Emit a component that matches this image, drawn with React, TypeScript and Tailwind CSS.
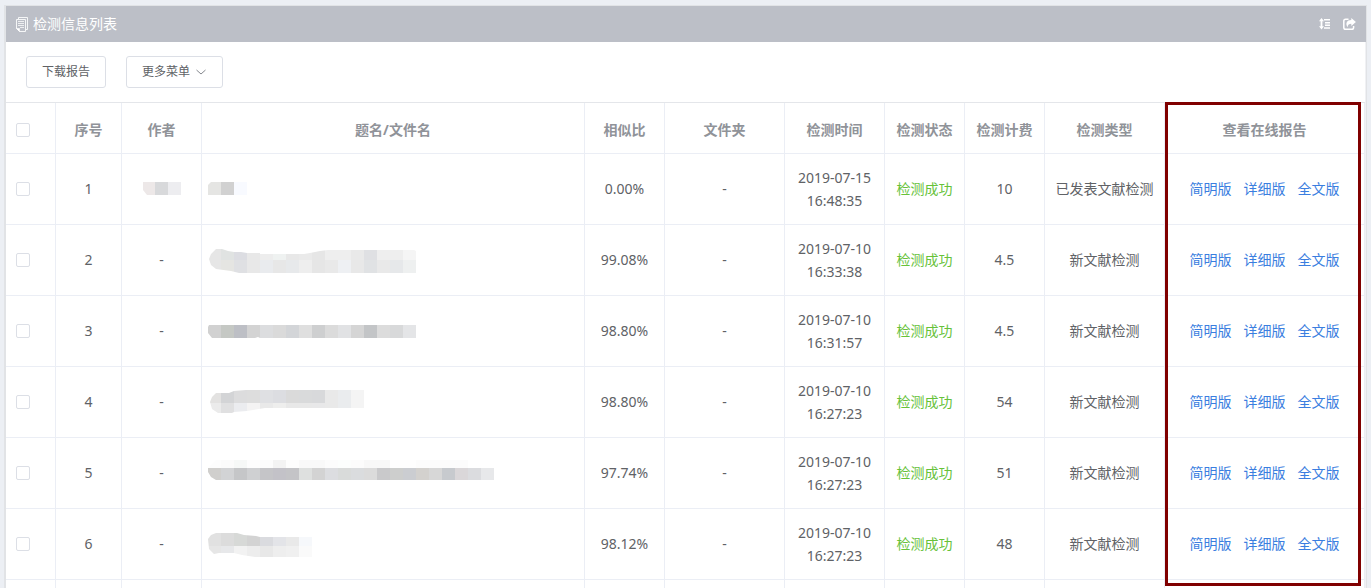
import { useId } from "react"

type MosaicBand = { y: number; height: number; colors: string[] }

type MosaicData = { width: number; outline: string; bands: MosaicBand[] }

type ReportRow = {
  id: number
  author?: MosaicData
  title: MosaicData
  similarity: string
  date: string
  time: string
  fee: string
  type: string
}

const CELL = 13

const ROWS: ReportRow[] = [
  {
    id: 1,
    author: {
      width: 39,
      outline: "M1 6H39V19H5L1 14Z",
      bands: [{ y: 6, height: 13, colors: ["#ede8e8", "#d8d9db", "#ededf0"] }],
    },
    title: {
      width: 39,
      outline: "M3 6H39V19H0V9Z",
      bands: [{ y: 6, height: 13, colors: ["#e5e5e3", "#d1d1d1", "#f8faff"] }],
    },
    similarity: "0.00%",
    date: "2019-07-15",
    time: "16:48:35",
    fee: "10",
    type: "已发表文献检测",
  },
  {
    id: 2,
    title: {
      width: 208,
      outline:
        "M1 12L3 7L8 2H14L20 4L26 5L33 5L39 6H52V7H96L102 6L112 4L120 3H206L208 4V26H31L23 24L8 22L3 18Z",
      bands: [
        {
          y: 0,
          height: 13,
          colors: [
            "#e6e6e6", "#e0e3e2", "#dcdde2", "#e8e8e8", "#ededed", "#eff2f1", "#e8e8e8", "#eaeaea",
            "#e6e6e6", "#eeeeee", "#eeeeee", "#e9e9e9", "#dfe0e3", "#eeeeee", "#eeeeee", "#f5f5f5",
          ],
        },
        {
          y: 13,
          height: 13,
          colors: [
            "#e6e6e6", "#e5e5e2", "#dfe0e3", "#e8e8e8", "#e9ebee", "#e7e7e7", "#e7e9eb", "#eeeeee",
            "#e6e6e6", "#e9e9e9", "#eef0f3", "#e8e8e8", "#e0e2e4", "#e9e9e9", "#e6e8ea", "#eef0f0",
          ],
        },
      ],
    },
    similarity: "99.08%",
    date: "2019-07-10",
    time: "16:33:38",
    fee: "4.5",
    type: "新文献检测",
  },
  {
    id: 3,
    title: {
      width: 208,
      outline: "M1 7H208V20H52L50 19L47 20H4L0 15V9Z",
      bands: [
        {
          y: 7,
          height: 13,
          colors: [
            "#d1d1d1", "#c5c8c4", "#bdbfc5", "#d3d3d3", "#dcdddf", "#dadada", "#d3d5d8", "#dfdfdf",
            "#cecfd0", "#dbdbdb", "#e1e2e4", "#d5d5d5", "#c3c5c7", "#dcdcdc", "#d8d9da", "#e4e5e7",
          ],
        },
      ],
    },
    similarity: "98.80%",
    date: "2019-07-10",
    time: "16:31:57",
    fee: "4.5",
    type: "新文献检测",
  },
  {
    id: 4,
    title: {
      width: 156,
      outline: "M2 13L4 8L8 4H21L26 2L38 1H156V19H57L39 22L26 23L24 24H10L4 20Z",
      bands: [
        {
          y: 0,
          height: 14,
          colors: [
            "#e3e2e1", "#d3d4d6", "#dcdcdd", "#dddddd", "#dfe0e3", "#dcdde1", "#dadada", "#d9dadb",
            "#d8d9db", "#e9e9e9", "#eaecee", "#f4f4f4",
          ],
        },
        {
          y: 14,
          height: 12,
          colors: [
            "#ebebeb", "#e0e0e1", "#ebecef", "#f4f3f3", "#e9e9e9", "#eeeeed", "#e8e8e8", "#e8e8e8",
            "#e8e8e9", "#e9e9e9", "#eaecee", "#f4f4f4",
          ],
        },
      ],
    },
    similarity: "98.80%",
    date: "2019-07-10",
    time: "16:27:23",
    fee: "54",
    type: "新文献检测",
  },
  {
    id: 5,
    title: {
      width: 286,
      outline: "M0 8L8 0H260V8H286V20H8L3 17L0 12Z",
      bands: [
        {
          y: 0,
          height: 8,
          colors: [
            "#fdfdfd", "#fbfbfb", "#f6f8f7", "#fdfdfd", "#fcfcfc", "#f3f3f3", "#fdfdfd", "#f9f9f9",
            "#f9f9f9", "#fcfcfc", "#fcfefd", "#fcfcfc", "#f8f8f8", "#f8f8f8", "#fefefe", "#fefefe",
            "#fcfcfc", "#fcfcfc", "#fcfcfc", "#fcfcfc", "#ffffff", "#ffffff",
          ],
        },
        {
          y: 8,
          height: 12,
          colors: [
            "#d0cfcd", "#d2d3d5", "#c5c6c8", "#cfd0d2", "#c5c5c8", "#c3c2c8", "#c4c4c7", "#dee0df",
            "#d3d3d3", "#dcdde0", "#d9dbda", "#dadcde", "#dbdbdb", "#c9c9cb", "#cdcecd", "#cbcdd1",
            "#d3d1ce", "#d7d7d7", "#c7cace", "#dad7d9", "#dbdcdf", "#e7e8ea",
          ],
        },
      ],
    },
    similarity: "97.74%",
    date: "2019-07-10",
    time: "16:27:23",
    fee: "51",
    type: "新文献检测",
  },
  {
    id: 6,
    title: {
      width: 104,
      outline: "M0 8L3 4L8 2H29L36 4L48 5L52 6H104V26H47L34 24L26 22H11L6 23L1 18Z",
      bands: [
        {
          y: 0,
          height: 15,
          colors: [
            "#e1e1e1", "#dcdcdc", "#d7d9d7", "#d3d3d3", "#dadbdf", "#e3e4e8", "#e9e9e9", "#f6f8fb",
          ],
        },
        {
          y: 15,
          height: 11,
          colors: [
            "#e6e6e6", "#e7e8ea", "#f2f2f2", "#ededed", "#e8e8e8", "#eeeeee", "#f0f0f0", "#fafafa",
          ],
        },
      ],
    },
    similarity: "98.12%",
    date: "2019-07-10",
    time: "16:27:23",
    fee: "48",
    type: "新文献检测",
  },
]

const COLUMNS = [
  { label: "序号", width: "w-[66px]" },
  { label: "作者", width: "w-20" },
  { label: "题名/文件名", width: "" },
  { label: "相似比", width: "w-20" },
  { label: "文件夹", width: "w-[120px]" },
  { label: "检测时间", width: "w-[100px]" },
  { label: "检测状态", width: "w-20" },
  { label: "检测计费", width: "w-20" },
  { label: "检测类型", width: "w-[120px]" },
  { label: "查看在线报告", width: "w-[200px]" },
]

const LINKS = ["简明版", "详细版", "全文版"]

const cellClass = "border-r border-b border-[#ebeef5]"
const headCellClass = "border-r border-b border-[#ebeef5] pt-1"
const buttonClass =
  "flex h-8 items-center rounded-[3px] border border-[#dcdfe6] bg-white px-[15px] text-xs text-[#606266] hover:border-blue-300"

// Pixelated block that hides the private text of a cell
const Mosaic = ({ data }: { data: MosaicData }) => {
  const clipId = useId()

  return (
    <svg
      width={data.width}
      height={26}
      viewBox={`0 0 ${data.width} 26`}
      shapeRendering="crispEdges"
      aria-hidden="true"
    >
      <clipPath id={clipId}>
        <path d={data.outline} />
      </clipPath>
      <g clipPath={`url(#${clipId})`}>
        {data.bands.map((band) =>
          band.colors.map((color, i) => (
            <rect
              key={`${band.y}-${i}`}
              x={i * CELL}
              y={band.y}
              width={CELL}
              height={band.height}
              fill={color}
            />
          ))
        )}
      </g>
    </svg>
  )
}

const DocumentsIcon = () => (
  <svg width="13" height="15" viewBox="0 0 13 15" fill="none" stroke="currentColor" aria-hidden="true">
    <path d="M2.5 2V.5H11.5V12.5H10" strokeOpacity=".85" />
    <path d="M.5 2.5H9.5V14.5H3.5L.5 11.5Z" strokeOpacity=".85" />
    <path d="M.5 11.5H3.5V14.5Z" fill="currentColor" strokeOpacity=".6" />
    <path d="M2 4.5H8M2 6.5H8M2 8.5H8M4 10.5H8" strokeOpacity=".75" />
  </svg>
)

const LineHeightIcon = () => (
  <svg width="12" height="12" viewBox="0 0 12 12" fill="currentColor" aria-hidden="true">
    <path d="M2.5 0L5 3.2H3.4V8.3H5L2.5 11.5L0 8.3H1.6V3.2H0Z" />
    <path d="M5 1H11V2.5H5ZM6 4H11V5.4H6ZM6 6.6H11V8H6ZM5 9.2H11V10.7H5Z" />
  </svg>
)

const ShareIcon = () => (
  <svg width="13" height="12" viewBox="0 0 13 12" aria-hidden="true">
    <path
      d="M5.5 1.2H2.6Q.8 1.2 .8 3V9.4Q.8 11.2 2.6 11.2H8.8Q10.6 11.2 10.6 9.4V8"
      fill="none"
      stroke="currentColor"
      strokeWidth="1.5"
    />
    <path d="M8.3 0L12.9 4L8.3 8V5.8C6 5.8 4.9 6.6 4.6 9.2C2 5.4 3.9 2.1 8.3 2.1Z" fill="currentColor" />
  </svg>
)

const Checkbox = ({ label }: { label: string }) => (
  <input
    type="checkbox"
    aria-label={label}
    className="block h-3.5 w-3.5 appearance-none rounded-xs border border-[#dcdfe6] bg-white checked:bg-blue-500"
  />
)

const ReportTable = () => (
  <table className="w-full table-fixed border-separate border-spacing-0 border-t border-[#e4e6ea] text-center text-sm text-[#606266]">
    <thead>
      <tr className="h-[51px] text-[#909399]">
        <th className={`${headCellClass} w-[50px] px-2.5`}>
          <Checkbox label="全选" />
        </th>
        {COLUMNS.map((column) => (
          <th key={column.label} className={`${headCellClass} ${column.width} font-bold`}>
            {column.label}
          </th>
        ))}
      </tr>
    </thead>
    <tbody>
      {ROWS.map((row) => (
        <tr key={row.id} className="h-[71px]">
          <td className={`${cellClass} px-2.5`}>
            <Checkbox label={`选择 ${row.id}`} />
          </td>
          <td className={cellClass}>{row.id}</td>
          <td className={cellClass}>
            {row.author ? (
              <div className="flex justify-center">
                <Mosaic data={row.author} />
              </div>
            ) : (
              "-"
            )}
          </td>
          <td className={`${cellClass} px-1.5`}>
            <Mosaic data={row.title} />
          </td>
          <td className={cellClass}>{row.similarity}</td>
          <td className={cellClass}>-</td>
          <td className={`${cellClass} leading-[23px]`}>
            {row.date}
            <br />
            {row.time}
          </td>
          <td className={`${cellClass} text-[#67c23a]`}>检测成功</td>
          <td className={cellClass}>{row.fee}</td>
          <td className={`${cellClass} whitespace-nowrap`}>{row.type}</td>
          <td className={cellClass}>
            <div className="flex justify-center gap-3">
              {LINKS.map((link) => (
                <a key={link} href="#" className="text-[#3a7ee0] hover:underline">
                  {link}
                </a>
              ))}
            </div>
          </td>
        </tr>
      ))}
      <tr className="h-[71px]">
        <td className={cellClass} />
        {COLUMNS.map((column) => (
          <td key={column.label} className={cellClass} />
        ))}
      </tr>
    </tbody>
  </table>
)

const App = () => {
  return (
    <div className="h-screen overflow-hidden bg-[#eceff4] px-1 pt-[5px] font-['Noto_Sans','Noto_Sans_CJK_SC',sans-serif]">
      <section className="border-t border-r border-l-2 border-[#e1e3e6]">
        <header className="flex h-9 items-center justify-between bg-[#bcbfc7] px-2.5 text-white">
          <h1 className="flex items-center gap-1 text-sm">
            <DocumentsIcon />
            检测信息列表
          </h1>
          <div className="flex items-center gap-3">
            <button type="button" aria-label="行高">
              <LineHeightIcon />
            </button>
            <button type="button" aria-label="分享">
              <ShareIcon />
            </button>
          </div>
        </header>

        <div className="border-r border-[#f0f1f4] bg-white">
          <div className="flex gap-5 px-5 py-3.5">
            <button type="button" className={buttonClass}>
              下载报告
            </button>
            <button type="button" className={buttonClass}>
              更多菜单
              <svg
                width="12"
                height="12"
                viewBox="0 0 12 12"
                className="ml-[5px] text-[#85888e]"
                fill="none"
                stroke="currentColor"
                aria-hidden="true"
              >
                <path d="M1.5 4L6 8L10.5 4" />
              </svg>
            </button>
          </div>

          <div className="relative">
            <ReportTable />
            {/* Highlight around the online report column */}
            <div className="pointer-events-none absolute top-0 right-1 h-[484px] w-[196px] border-3 border-[#800000]" />
          </div>
        </div>
      </section>
    </div>
  )
}

export default App
